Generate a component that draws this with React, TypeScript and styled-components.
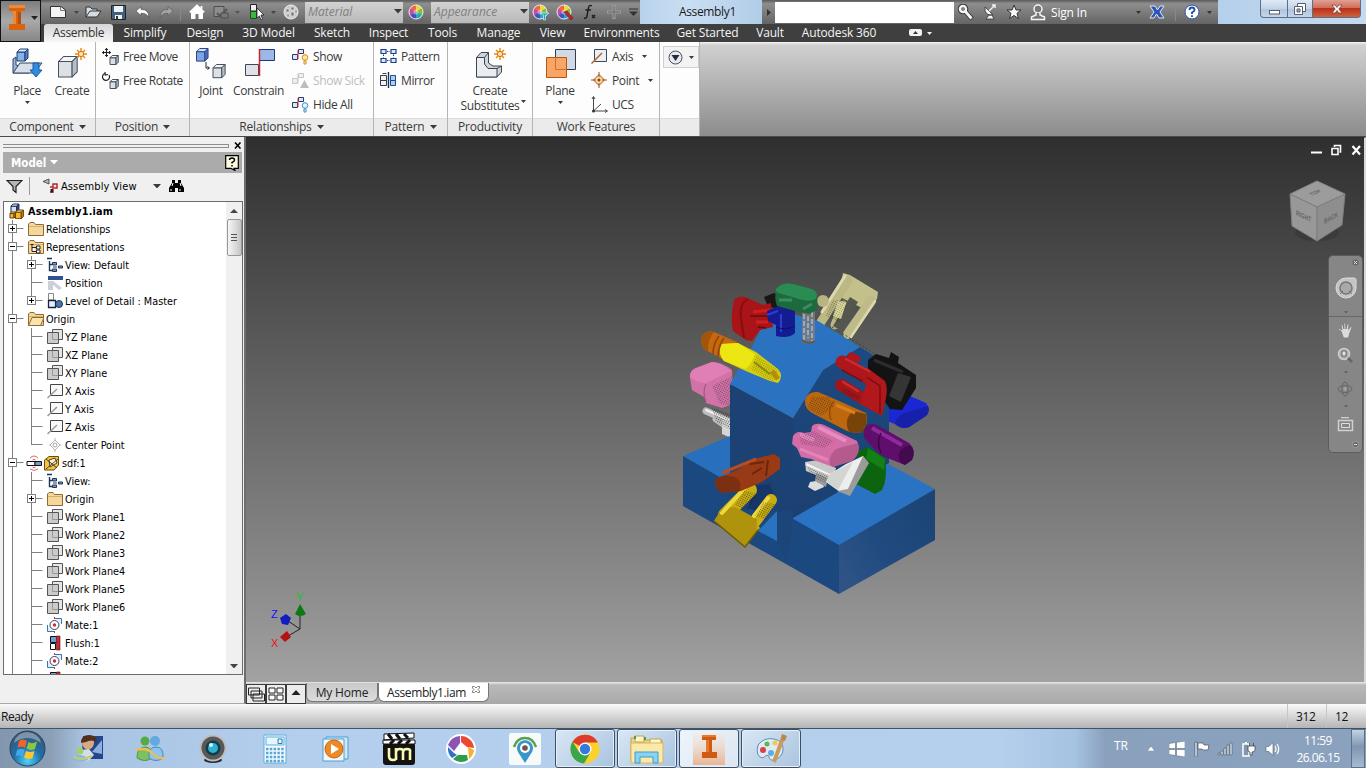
import type { ReactNode } from "react";
import styled, { createGlobalStyle, css } from "styled-components";

const GlobalStyle = createGlobalStyle`
  * { box-sizing: border-box; }
  body {
    margin: 0;
    overflow: hidden;
    background: #f0f0f0;
    font-family: "Open Sans", "Noto Sans", sans-serif;
    font-size: 12px;
    color: #3a3a3a;
  }
  svg { display: block; flex: none; }
`;

const Window = styled.div`
  width: 1366px;
  height: 768px;
  display: flex;
  flex-direction: column;
  overflow: hidden;
`;

/* ---------- header ---------- */

const Header = styled.div`
  display: flex;
  height: 42px;
  background: #3f3f3f;
`;

const AppButton = styled.div`
  width: 41px;
  height: 42px;
  border: 1px solid #111;
  background: linear-gradient(#7d7d7d, #a9a9a9 50%, #868686);
  display: flex;
  align-items: center;
  justify-content: space-between;
  padding: 0 2px 7px 6px;
`;

const HeaderRows = styled.div`
  flex: 1;
  display: flex;
  flex-direction: column;
`;

const TitleBar = styled.div`
  display: flex;
  height: 24px;
  background: linear-gradient(#5a5a5a, #8e8e8e 15%, #646464);
`;

const Slot = styled.div<{ $w: number }>`
  width: ${(p) => p.$w}px;
  height: 24px;
  flex: none;
  display: flex;
  align-items: center;
  justify-content: center;
`;

const Combo = styled.div<{ $w: number }>`
  width: ${(p) => p.$w}px;
  height: 21px;
  margin-top: 2px;
  flex: none;
  display: flex;
  align-items: center;
  justify-content: space-between;
  padding: 0 1px 2px 3px;
  background: linear-gradient(#d2d2d2, #b9b9b9);
  color: #808080;
  font-style: italic;
  font-size: 12px;
`;

const DocTitle = styled.div`
  width: 122px;
  flex: none;
  padding: 3px 0 0 39px;
  line-height: 18px;
  background: linear-gradient(90deg, #b9d2ec, #c9def3 40%, #b2cde9);
  color: #1a1a1a;
  letter-spacing: -0.35px;
`;

const SearchBox = styled.div`
  width: 179px;
  height: 21px;
  margin-top: 2px;
  flex: none;
  background: #fff;
`;

const SignIn = styled.div`
  width: 84px;
  line-height: 26px;
  padding-left: 1px;
  color: #fff;
  letter-spacing: -0.2px;
`;

const Glass = styled.div`
  flex: 1;
  display: flex;
  justify-content: flex-end;
  align-items: flex-start;
  padding-right: 5px;
  background: linear-gradient(90deg, #b5d0ec, #c5daef);
`;

const WinButton = styled.div<{ $w: number; $close?: boolean }>`
  width: ${(p) => p.$w}px;
  height: 18px;
  border: 1px solid #5c6f86;
  border-top: 0;
  display: flex;
  align-items: center;
  justify-content: center;
  background: linear-gradient(#dfe9f5, #c3d4e8 50%, #adc3dc 51%, #c3d6ec);
  & + & { border-left: 0; }
  &:first-child { border-radius: 0 0 0 4px; }
  ${(p) =>
    p.$close &&
    css`
      border-radius: 0 0 4px 0;
      background: linear-gradient(#e0a193, #cf6b55 48%, #b93219 50%, #d0623f);
    `}
`;

const TabRow = styled.div`
  display: flex;
  height: 18px;
`;

const RibbonTab = styled.div<{ $w: number; $active?: boolean }>`
  width: ${(p) => p.$w}px;
  flex: none;
  text-align: center;
  line-height: 17px;
  white-space: nowrap;
  letter-spacing: -0.15px;
  color: #f4f4f4;
  ${(p) =>
    p.$active &&
    css`
      background: linear-gradient(#d6d6d6, #f6f6f6);
      border-radius: 3px 3px 0 0;
      letter-spacing: -0.3px;
      color: #333;
    `}
`;

/* ---------- ribbon ---------- */

const Ribbon = styled.div`
  display: flex;
  height: 95px;
  border-bottom: 1px solid #4b4b4b;
  background: linear-gradient(#f4f4f4 0, #d0d0d0 3px, #8c8c8c);
`;

const Panel = styled.div<{ $w: number }>`
  width: ${(p) => p.$w}px;
  flex: none;
  display: flex;
  flex-direction: column;
  border-right: 1px solid #b5b5b5;
  background: #fdfdfd;
`;

const PanelBody = styled.div<{ $pl?: number }>`
  height: 76px;
  display: flex;
  padding-left: ${(p) => p.$pl ?? 0}px;
`;

const PanelFooter = styled.div`
  height: 18px;
  display: flex;
  align-items: center;
  justify-content: center;
  gap: 5px;
  padding-bottom: 2px;
  background: #ebebeb;
  border-top: 1px solid #dcdcdc;
  white-space: nowrap;
  letter-spacing: -0.2px;
`;

const BigButton = styled.div<{ $w: number; $loose?: boolean }>`
  width: ${(p) => p.$w}px;
  flex: none;
  display: flex;
  flex-direction: column;
  align-items: center;
  padding-top: 5px;
  line-height: 15px;
  text-align: center;
  white-space: nowrap;
  letter-spacing: -0.35px;
  & > svg:first-child { margin-bottom: 4px; }
  & > svg:last-child:not(:first-child) { margin-top: 3px; }
`;

const SubstituteRow = styled.div`
  display: flex;
  align-items: center;
  gap: 2px;
  padding-left: 7px;
  & > svg { margin-bottom: 9px; }
`;

const SmallList = styled.div<{ $ml?: number }>`
  display: flex;
  flex-direction: column;
  padding-top: 2px;
  margin-left: ${(p) => p.$ml ?? 0}px;
`;

const SmallButton = styled.div<{ $dim?: boolean }>`
  height: 24px;
  display: flex;
  align-items: center;
  gap: 4px;
  white-space: nowrap;
  letter-spacing: -0.4px;
  color: ${(p) => (p.$dim ? "#bdbdbd" : "#3a3a3a")};
  & > svg:last-child:not(:first-child) { margin-left: 5px; }
`;

const DropButton = styled.div`
  width: 36px;
  height: 22px;
  margin-top: 4px;
  display: flex;
  align-items: center;
  justify-content: center;
  gap: 6px;
  border: 1px solid #cfcfcf;
  background: #f3f3f3;
`;

/* ---------- browser panel ---------- */

const Work = styled.div`
  display: flex;
  height: 567px;
`;

const Browser = styled.div`
  width: 246px;
  flex: none;
  padding: 3px 1px 0 3px;
  background: #f0f0f0;
  border-right: 2px solid #6e6e6e;
  border-bottom: 1px solid #a8a8a8;
  font-family: "DejaVu Sans Condensed", "DejaVu Sans", sans-serif;
  font-size: 10.75px;
  color: #000;
`;

const Grip = styled.div`
  width: 239px;
  height: 11px;
  display: flex;
  align-items: center;
  justify-content: space-between;
`;

const GripLines = styled.div`
  width: 226px;
  height: 4px;
  border: 1px solid #8d8d8d;
  border-left: 0;
`;

const BrowserTitle = styled.div`
  height: 21px;
  margin-top: 1px;
  width: 239px;
  display: flex;
  align-items: center;
  gap: 4px;
  padding: 0 3px 0 8px;
  background: #ababab;
  color: #fff;
  font-size: 11.5px;
  font-weight: bold;
  & > svg:last-child { margin-left: auto; }
`;

const BrowserTools = styled.div`
  height: 28px;
  display: flex;
  align-items: center;
  padding: 0 0 2px 3px;
`;

const ToolDivider = styled.div`
  width: 1px;
  height: 18px;
  margin: 0 13px 0 6px;
  background: #9b9b9b;
`;

const ViewName = styled.div`
  width: 92px;
  margin-left: 2px;
  font-size: 11px;
  letter-spacing: 0.1px;
  white-space: nowrap;
`;

const TreeBox = styled.div`
  width: 240px;
  height: 474px;
  display: flex;
  border: 1px solid #6b6b6b;
  background: #fff;
`;

const TreeRows = styled.div`
  flex: 1;
  overflow: hidden;
`;

const TreeRow = styled.div<{ $bold?: boolean }>`
  height: 18px;
  display: flex;
  align-items: center;
  gap: 2px;
  white-space: nowrap;
  letter-spacing: ${(p) => (p.$bold ? "0.2px" : "0")};
  font-weight: ${(p) => (p.$bold ? "bold" : "normal")};
`;

const ScrollTrack = styled.div`
  width: 16px;
  display: flex;
  flex-direction: column;
  align-items: center;
  padding: 7px 0 6px;
  background: #f0f0f0;
`;

const ScrollThumb = styled.div`
  width: 15px;
  height: 37px;
  margin-top: 6px;
  margin-bottom: auto;
  display: flex;
  align-items: center;
  justify-content: center;
  border: 1px solid #989898;
  border-radius: 2px;
  background: linear-gradient(90deg, #f5f5f5, #dcdcdc 55%, #c4c4c4);
`;

/* ---------- viewport ---------- */

const Main = styled.div`
  flex: 1;
  display: flex;
  flex-direction: column;
`;

const Viewport = styled.div`
  position: relative;
  height: 545px;
  border-top: 1px solid #2a2a2a;
  border-right: 2px solid #d8d8d8;
  background: linear-gradient(#2f2f2f, #4a4a4a 24%, #8b8b8b 82%, #a2a2a2);
`;

const DocControls = styled.div`
  position: absolute;
  top: 6px;
  right: 2px;
  display: flex;
  gap: 9px;
`;

const NavBar = styled.div`
  position: absolute;
  top: 117px;
  right: 1px;
  width: 35px;
  height: 198px;
  display: flex;
  flex-direction: column;
  align-items: center;
  border: 1px solid #5c5c5c;
  border-radius: 5px;
  background: #868686;
`;

const NavSlot = styled.div<{ $h: number; $end?: boolean; $line?: boolean }>`
  width: 100%;
  height: ${(p) => p.$h}px;
  display: flex;
  align-items: center;
  justify-content: ${(p) => (p.$end ? "flex-end" : "center")};
  padding-right: ${(p) => (p.$end ? 3 : 0)}px;
  border-bottom: ${(p) => (p.$line ? "1px solid #676767" : "0")};
`;

const DocTabs = styled.div`
  display: flex;
  height: 22px;
  background: linear-gradient(#ececec 0, #b9b9b9 3px, #a9a9a9);
  color: #222;
`;

const DocTool = styled.div`
  width: 20px;
  height: 20px;
  margin-top: 2px;
  display: flex;
  align-items: center;
  justify-content: center;
  border: 1px solid #3c3c3c;
  background: #ececec;
`;

const DocTab = styled.div<{ $w: number; $active?: boolean }>`
  width: ${(p) => p.$w}px;
  height: 19px;
  margin-top: 1px;
  display: flex;
  justify-content: center;
  gap: 6px;
  line-height: 19px;
  letter-spacing: ${(p) => (p.$active ? "-0.4px" : "-0.2px")};
  border: 1px solid #777;
  border-top: 0;
  border-radius: 0 0 6px 6px;
  background: ${(p) => (p.$active ? "#fff" : "linear-gradient(#c9c9c9, #dcdcdc)")};
`;

/* ---------- status and task bars ---------- */

const StatusBar = styled.div`
  display: flex;
  height: 25px;
  line-height: 26px;
  padding-left: 1px;
  background: linear-gradient(#fafafa, #dedede 40%, #b4b4b4);
  border-bottom: 1px solid #3f5468;
  color: #111;
  letter-spacing: -0.4px;
`;

const StatusText = styled.div`
  flex: 1;
`;

const StatusCell = styled.div<{ $w: number }>`
  width: ${(p) => p.$w}px;
  padding-left: 8px;
  border-left: 1px solid #c6c6c6;
`;

const TaskBar = styled.div`
  display: flex;
  height: 39px;
  background: linear-gradient(90deg, #8296ad, #8a9eb6 50px, #a9c4e2 85px, #b3cfed 300px, #b5d0ed 1000px, #a5c3e2 1075px, #8aa1bd 1105px, #8ba2be);
`;

const TaskSlot = styled.div<{ $w: number }>`
  width: ${(p) => p.$w}px;
  flex: none;
  display: flex;
  align-items: center;
  justify-content: center;
`;

const TaskButton = styled.div<{ $active?: boolean }>`
  width: 60px;
  height: 39px;
  margin-right: 2px;
  flex: none;
  display: flex;
  align-items: center;
  justify-content: center;
  border: 1px solid #3f4f61;
  border-radius: 3px;
  box-shadow: inset 0 0 0 1px #e6f0fa;
  background: ${(p) => (p.$active ? "linear-gradient(135deg, #eef5fb, #dbe6f1)" : "linear-gradient(135deg, #d9e7f5, #a9c3df)")};
`;

const Tray = styled.div`
  margin-left: auto;
  display: flex;
  color: #fff;
`;

const Language = styled.div`
  width: 33px;
  padding-left: 8px;
  line-height: 34px;
`;

const Clock = styled.div`
  width: 66px;
  padding-top: 3px;
  text-align: center;
  line-height: 17px;
  letter-spacing: -0.55px;
`;

const ShowDesktop = styled.div`
  width: 14px;
  margin-right: 1px;
  border: 1px solid #5c7188;
  background: linear-gradient(#c3d3e4, #8096b0 45%, #a5bbd3);
`;

/* ---------- icons ---------- */

type IconProps = { w?: number; h?: number; vb?: string; children: ReactNode };
const Icon = ({ w = 16, h = 16, vb, children }: IconProps) => (
  <svg width={w} height={h} viewBox={vb ?? `0 0 ${w} ${h}`} fill="none">
    {children}
  </svg>
);

const Caret = ({ color = "#3a3a3a", w = 7 }: { color?: string; w?: number }) => (
  <Icon w={w} h={w / 2 + 0.5} vb="0 0 8 4.5">
    <path d="M0 0H8L4 4.5Z" fill={color} />
  </Icon>
);

const ColorWheel = ({ tool }: { tool?: "cup" | "pen" }) => (
  <Icon w={18} h={18}>
    <path d="M8 9V2A7 7 0 0 1 14 5.5Z" fill="#f3d43b" />
    <path d="M8 9 14 5.5A7 7 0 0 1 14 12.500Z" fill="#79c143" />
    <path d="M8 9 14 12.5A7 7 0 0 1 8 16Z" fill="#25a7c9" />
    <path d="M8 9V16A7 7 0 0 1 2 12.500Z" fill="#4450c0" />
    <path d="M8 9 2 12.5A7 7 0 0 1 2 5.500Z" fill="#c04bb5" />
    <path d="M8 9 2 5.500A7 7 0 0 1 8 2Z" fill="#ee6a3c" />
    <circle cx="8" cy="9" r="2.500" fill="#fff" opacity=".4" />
    <circle cx="8" cy="9" r="7" stroke="#eee" />
    {tool === "cup" && <path d="M8 10H17L15 12H13.500V17H11.500V12Z" fill="#2f9fc4" stroke="#dff" strokeWidth=".6" />}
    {tool === "pen" && <path d="M8 9 15 17 17 15 11 8Z" fill="#c3242b" stroke="#711" strokeWidth=".6" />}
  </Icon>
);

const Cube = ({ x = 0, y = 0, s = 1, fill = "#dde1e6", top = "#f4f5f7", side = "#b8bec6", stroke = "#45505e" }) => (
  <g transform={`translate(${x} ${y}) scale(${s})`} stroke={stroke} strokeWidth={1 / s} strokeLinejoin="round">
    <path d="M0 3H8V12H0Z" fill={fill} />
    <path d="M0 3 3 0H11L8 3Z" fill={top} />
    <path d="M8 3 11 0V9L8 12Z" fill={side} />
  </g>
);

const Spark = ({ x, y }: { x: number; y: number }) => (
  <g transform={`translate(${x} ${y})`}>
    <path d="M0-6V6M-6 0H6M-4-4 4 4M4-4-4 4" stroke="#e8890c" strokeWidth="1.4" />
    <circle r="2.600" fill="#ffe9b5" stroke="#d9700a" />
  </g>
);

const PlaceIcon = () => (
  <Icon w={32} h={32}>
    <path d="M2 12 5 10V18L12 20H25L18 26H2Z" fill="#9eb6d2" stroke="#2c4668" />
    <path d="M2 26 9 16H31L23 26Z" fill="#d7dfe8" stroke="#2c4668" />
    <Cube x={6} y={2} fill="#85b2e8" top="#d5e7fb" side="#4f83c6" stroke="#1f3f73" />
    <path d="M22 16H28V23H31L25 30 19 23H22Z" fill="#2f8be0" stroke="#175a9f" />
  </Icon>
);

const CreateIcon = () => (
  <Icon w={32} h={32}>
    <Cube x={2.500} y={9.500} s={1.7} />
    <Spark x={25} y={7} />
  </Icon>
);

const JointIcon = () => (
  <Icon w={32} h={32}>
    <Cube x={1.500} y={1.500} s={1.05} fill="#7ca5e2" top="#cfe0f8" side="#4a72b8" stroke="#2a4887" />
    <path d="M11 15V21H14M12.500 19.500 14.500 21 12.500 22.500" stroke="#222" />
    <Cube x={18} y={17.500} s={1.1} />
  </Icon>
);

const ConstrainIcon = () => (
  <Icon w={32} h={32}>
    <path d="M16.500 2.500H31.500V13.500H16.500Z" fill="#9db8e8" stroke="#1e3a76" />
    <path d="M2.500 17.500H15.500V28.500H2.500Z" fill="#e0e2e5" stroke="#39475c" />
    <path d="M16.500 2V29" stroke="#d1202c" strokeWidth="1.500" />
  </Icon>
);

const SubstituteIcon = () => (
  <Icon w={32} h={32}>
    <path d="M2.500 10.500 7 5.500H14.500V16L19 19H27.500V25L23 30H2.500Z" fill="#cfd4da" stroke="#3c4654" />
    <path d="M2.500 10.500H10.500V17L14 21.500H23V30H2.500Z" fill="#eaecef" stroke="#3c4654" />
    <path d="M10.500 10.500 14.500 5.500M23 21.500 27.500 19" stroke="#3c4654" />
    <Spark x={26} y={7} />
  </Icon>
);

const PlaneIcon = () => (
  <Icon w={32} h={32}>
    <path d="M11.500 2.500H31.500V22.500H11.500Z" fill="#d3d9e2" stroke="#2c3d59" />
    <path d="M2.500 10.500H22.500V30.500H2.500Z" fill="#f9a566" stroke="#b8560e" />
    <path d="M11.500 10.500V22.500H22.500" stroke="#d2702a" />
  </Icon>
);

const FreeIcon = ({ rotate }: { rotate?: boolean }) => (
  <Icon w={17} h={17}>
    {rotate ? (
      <path d="M3 1.500A3.500 3.500 0 1 0 7 3M3 0 3.300 3 6 2.500" stroke="#222" strokeWidth="1.200" />
    ) : (
      <path d="M4.500 0V9M0 4.500H9M3 1.500H6M3 7.500H6M1.500 3V6M7.500 3V6" stroke="#222" strokeWidth="1.100" />
    )}
    <Cube x={8} y={7.500} s={0.75} />
  </Icon>
);

const ShowIcon = ({ kind }: { kind: "show" | "sick" | "hide" }) => {
  const dim = kind === "sick";
  return (
    <Icon w={17} h={17}>
      <path d="M.5 6.500H5.500V11.500H.5ZM6.500 1.500H11.500V5.500H6.500Z" fill={dim ? "#eee" : "#dfe5f2"} stroke={dim ? "#c6c6c6" : "#26396b"} />
      <path d="M6 2V11" stroke={dim ? "#c6c6c6" : "#c92c3c"} />
      {dim ? (
        <path d="M12.500 8 17 16H8Z" fill="#bdbdbd" />
      ) : (
        <g stroke={kind === "show" ? "#d58a12" : "#3b8fc4"}>
          <circle cx="13" cy="9.500" r="2.800" fill={kind === "show" ? "#ffe79a" : "#e4f4ff"} />
          <path d="M12 13H14V16H12Z" />
        </g>
      )}
    </Icon>
  );
};

const PatternIcon = () => (
  <Icon w={17} h={16}>
    <g fill="#dce8fa" stroke="#1b3f86" strokeWidth="1.200">
      <path d="M1 1.500H6V5.500H1ZM11 1.500H16V5.500H11ZM1 10.500H6V14.500H1ZM11 10.500H16V14.500H11Z" />
    </g>
    <path d="M7 3.500H10M3.500 6.500V9.500M13.500 6.500V9.500M7 12.500H10" stroke="#1b3f86" strokeDasharray="1.500 1" />
  </Icon>
);

const MirrorIcon = () => (
  <Icon w={17} h={16}>
    <path d="M.5 3.500H6.500V13.500H.5ZM2.500 1.500H6.500M.5 8.500H6.500" fill="#f0f2f5" stroke="#333e4d" />
    <path d="M10.500 3.500H15.500V13.500H10.500ZM10.500 8.500H15.500" fill="#a9cff3" stroke="#1f4c86" />
    <path d="M8.500 0V16" stroke="#1b2f57" strokeWidth="1.400" />
  </Icon>
);

const AxisIcon = () => (
  <Icon w={17} h={17}>
    <path d="M3.500 1.500H15.500V13.500H3.500Z" fill="#eceff3" stroke="#3c4a60" />
    <path d="M.500 15.500 11 5" stroke="#b5631e" strokeWidth="1.400" />
  </Icon>
);

const PointIcon = () => (
  <Icon w={17} h={17}>
    <path d="M8 2.500 13.500 8 8 13.500 2.500 8Z" fill="#fbd7a6" stroke="#a1551c" />
    <path d="M8 0V5M8 11V16M0 8H5M11 8H16" stroke="#a1551c" />
    <circle cx="8" cy="8" r="1.500" fill="#8a3d0c" />
  </Icon>
);

const UcsIcon = () => (
  <Icon w={17} h={17}>
    <path d="M2.500 1V15H16M2.500 15 10 8M1 3 2.500 .5 4 3M14 13.500 16.500 15 14 16.500" stroke="#4a4a4a" />
    <circle cx="2.500" cy="15" r="1.500" fill="#333" />
  </Icon>
);

const FolderIcon = ({ open, tree }: { open?: boolean; tree?: boolean }) => (
  <Icon>
    <path d="M.5 3 2 1.500H6L7.500 3.500H15.500V14.500H.5Z" fill="#f5d79b" stroke="#8f6b33" />
    <path d="M1 5.500H15" stroke="#d4b06d" />
    {open && <path d="M.5 14.500 4 6.500H16L12.500 14.500Z" fill="#fbe3ae" stroke="#8f6b33" />}
    {tree && <path d="M2.500 5.500H5.500M4 5.500V12.500H8M4 8.500H8M8.500 7V10H12V7ZM8.500 11V14H12V11Z" fill="#fff" stroke="#222" />}
  </Icon>
);

const ViewIcon = () => (
  <Icon>
    <path d="M0 1.500H5M2.500 4V13.500H5M2.500 7.500H5" stroke="#1e3458" strokeWidth="1.400" />
    <path d="M5.500 5.500H9.500V8H5.500ZM5.500 12H9.500V14.500H5.500ZM11.500 9H15.500V11H11.500ZM6 10H10" fill="#7f98c0" stroke="#1e3458" />
  </Icon>
);

const PositionIcon = () => (
  <Icon>
    <path d="M1 1H16V5H1Z" fill="#31538d" />
    <path d="M1 6H6V15H1ZM6 6 15 13 12 15 5 9Z" fill="#c9d0da" />
  </Icon>
);

const DetailIcon = () => (
  <Icon>
    <path d="M1.500.5H6.500V7H1.500Z" fill="#fff" stroke="#888" />
    <path d="M1.500 7.500H8.500V14.500H1.500Z" fill="#eef" stroke="#14233d" strokeWidth="1.300" />
    <circle cx="12" cy="11" r="3.500" fill="#4a76ac" stroke="#1c3152" />
  </Icon>
);

const WorkPlaneIcon = () => (
  <Icon>
    <path d="M5.500.5H15.500V10.500H5.500Z" fill="#e6e6e6" stroke="#555" />
    <path d="M.5 3.500H11.500V14.500H.5Z" fill="#cbcbcb" stroke="#555" />
    <path d="M5.500 4V10.500H11" stroke="#999" />
  </Icon>
);

const WorkAxisIcon = () => (
  <Icon>
    <path d="M3.500 1.500H15.500V12.500H3.500Z" fill="#f8f8f8" stroke="#444" />
    <path d="M.5 15 10 6" stroke="#9a9a9a" strokeWidth="1.500" />
  </Icon>
);

const CenterIcon = () => (
  <Icon>
    <path d="M8 3 13 8 8 13 3 8ZM8 1V4M8 12V15M2 8H4M12 8H14" stroke="#b5b5b5" />
    <circle cx="8" cy="8" r="2" stroke="#a5a5a5" />
  </Icon>
);

const PartIcon = () => (
  <Icon w={34} vb="0 0 34 16">
    <path d="M1 6.500H9V10.500H1Z" fill="#fff" stroke="#111" />
    <path d="M9 6.500H15.500V10.500H9Z" fill="#7d98c4" stroke="#111" />
    <path d="M4 3Q8-1 12 3M4 14Q8 17 12 14M6.500 5Q8 3.500 9.500 5M6.500 12Q8 13.500 9.500 12" stroke="#dd6a64" />
    <path d="M18.500 5 23 1.500H32.500V10L28 15H18.500Z" fill="#f5c242" stroke="#6c4a08" />
    <path d="M20 14 32 4M20 4 31 13M23 5 29 3 31 8 24 12Z" fill="#fff2c0" stroke="#222" strokeWidth=".8" />
  </Icon>
);

const MateIcon = () => (
  <Icon>
    <path d="M8 1.500H14.500V7M.5 8V14.500H7" stroke="#3b74b5" fill="#e3eefb" />
    <circle cx="7.500" cy="8" r="4.500" fill="#fff" stroke="#333f63" />
    <circle cx="7.500" cy="8" r="1.700" fill="#cf2c2c" />
    <path d="M7.500 0V2M7.500 14V16" stroke="#cf2c2c" />
  </Icon>
);

const FlushIcon = () => (
  <Icon>
    <path d="M3.500 1.500H10.500V7.500H3.500Z" fill="#6e9ad6" stroke="#111" />
    <path d="M3.500 8.500H8.500V14.500H3.500Z" fill="#fff" stroke="#111" />
    <path d="M9.500 1H13V15H9.500Z" fill="#c52a33" stroke="#511" strokeWidth=".6" />
  </Icon>
);

const AssemblyIcon = () => (
  <Icon w={17} h={16}>
    <Cube x={2} y={1} s={0.72} fill="#d5e2f6" top="#eef4fd" side="#3a5794" stroke="#14224a" />
    <Cube x={1} y={9} s={0.5} fill="#f3b62e" top="#ffe08a" side="#c98310" stroke="#6b4504" />
    <Cube x={6.500} y={7} s={0.72} fill="#f3b62e" top="#ffe08a" side="#c98310" stroke="#6b4504" />
  </Icon>
);

/* ---------- tree ---------- */

type Node = {
  text: string;
  level: number;
  icon: ReactNode;
  box?: "+" | "-";
  last?: boolean;
};

const planes = [1, 2, 3, 4, 5, 6].map((n) => ({ text: `Work Plane${n}`, level: 2, icon: <WorkPlaneIcon /> }));

const nodes: Node[] = [
  { text: "Assembly1.iam", level: 0, icon: <AssemblyIcon /> },
  { text: "Relationships", level: 1, icon: <FolderIcon />, box: "+" },
  { text: "Representations", level: 1, icon: <FolderIcon tree />, box: "-" },
  { text: "View: Default", level: 2, icon: <ViewIcon />, box: "+" },
  { text: "Position", level: 2, icon: <PositionIcon /> },
  { text: "Level of Detail : Master", level: 2, icon: <DetailIcon />, box: "+", last: true },
  { text: "Origin", level: 1, icon: <FolderIcon open />, box: "-" },
  { text: "YZ Plane", level: 2, icon: <WorkPlaneIcon /> },
  { text: "XZ Plane", level: 2, icon: <WorkPlaneIcon /> },
  { text: "XY Plane", level: 2, icon: <WorkPlaneIcon /> },
  { text: "X Axis", level: 2, icon: <WorkAxisIcon /> },
  { text: "Y Axis", level: 2, icon: <WorkAxisIcon /> },
  { text: "Z Axis", level: 2, icon: <WorkAxisIcon /> },
  { text: "Center Point", level: 2, icon: <CenterIcon />, last: true },
  { text: "sdf:1", level: 1, icon: <PartIcon />, box: "-" },
  { text: "View:", level: 2, icon: <ViewIcon /> },
  { text: "Origin", level: 2, icon: <FolderIcon />, box: "+" },
  ...planes,
  { text: "Mate:1", level: 2, icon: <MateIcon /> },
  { text: "Flush:1", level: 2, icon: <FlushIcon /> },
  { text: "Mate:2", level: 2, icon: <MateIcon /> },
  { text: "", level: 2, icon: <FlushIcon /> },
];

const Guide = ({ node }: { node: Node }) => {
  if (node.level === 0) return <Icon w={3} h={18}>{null}</Icon>;
  const cx = node.level === 1 ? 8.5 : 27.5;
  const w = node.text === "sdf:1" ? 20 : node.level === 1 ? 22 : 41;
  return (
    <Icon w={w} h={18}>
      <path d="M8.500 0V18" stroke="#808080" />
      {node.level === 2 && <path d={node.last ? "M27.500 0V9" : "M27.500 0V18"} stroke="#808080" />}
      <path d={`M${cx} 8.500H${cx + 11}`} stroke="#808080" />
      {node.box && (
        <>
          <rect x={cx - 4} y="4.500" width="8" height="8" fill="#fff" stroke="#808080" />
          <path d={`M${cx - 2.5} 8.500H${cx + 2.5}${node.box === "+" ? `M${cx} 6V11` : ""}`} stroke="#000" />
        </>
      )}
    </Icon>
  );
};

/* ---------- 3D scene ---------- */

const Scene = () => (
  <svg width="1118" height="544" viewBox="246 138 1118 544" fill="none">
    <defs>
      <pattern id="mesh" width="2" height="2" patternUnits="userSpaceOnUse" patternTransform="rotate(25)">
        <path d="M0 0H1V1H0Z" fill="#111" />
      </pattern>
      <linearGradient id="side" x1="839" y1="570" x2="935" y2="510" gradientUnits="userSpaceOnUse">
        <stop stopColor="#2f5385" />
        <stop offset=".4" stopColor="#214b80" />
        <stop offset="1" stopColor="#1c4475" />
      </linearGradient>
      <linearGradient id="right" x1="0" y1="0" x2="0" y2="1">
        <stop stopColor="#1b4a82" />
        <stop offset="1" stopColor="#1c4070" />
      </linearGradient>
    </defs>

    {/* far side clamps */}
    <g strokeLinecap="round">
      <path d="M706 411 731 422M716 419 731 429" stroke="#bdbdbd" strokeWidth="7" />
      <path d="M706 410 731 421" stroke="#f2f2f2" strokeWidth="2" />
      <path d="M722 420H731V438L722 434Z" fill="#d5d5d5" />
      <path d="M712 408 731 414V430L716 422Z" fill="url(#mesh)" opacity=".6" />
    </g>
    <path d="M690 378Q689 371 696 368L712 362Q722 362 732 370L733 404 722 408 706 403 704 397 692 390Z" fill="#d273a8" />
    <path d="M690 377Q697 383 706 383L731 371Q722 363 712 362L696 368Q690 370 690 377Z" fill="#e07fb5" />
    <path d="M706 384Q702 392 706 402" stroke="#a0507c" />
    <path d="M712 386 732 376V406L720 404Z" fill="url(#mesh)" opacity=".45" />
    <g strokeLinecap="round">
      <path d="M843 273 850 275 878 292 877 299 866 310 838 296Z" fill="#c4c08c" />
      <path d="M848 280 821 322M843 305 835 325" stroke="#bcb884" strokeWidth="9" />
      <path d="M845 276 822 312" stroke="#dedab0" strokeWidth="3" />
      <path d="M871 301 848 334" stroke="#bfbb88" strokeWidth="10" />
      <path d="M875 301 851 337" stroke="#dbd7ac" strokeWidth="2.500" />
      <circle cx="823" cy="301" r="6" fill="#b9b581" />
      <path d="M850 297 858 302 840 330 833 326Z" fill="#55564c" />
      <path d="M838 301 846 303 841 319 833 316Z" fill="#dfdb9b" />
      <path d="M832 300 846 300 840 322 826 316Z" fill="url(#mesh)" opacity=".4" />
    </g>
    <path d="M832 327 880 357" stroke="#3a4045" strokeDasharray="2 2" />
    <path d="M882 410 905 400 910 396 926 403Q931 409 927 415L909 427Q902 430 895 424L882 419Z" fill="#1a28d4" />
    <path d="M895 424Q895 416 908 412L928 406Q930 412 926 416L909 427Q902 430 895 424Z" fill="#1620aa" />
    <path d="M764 297 774 293 785 298 782 309 768 307Z" fill="#171717" />

    {/* column and base */}
    <path d="M683 456 730 436V483Z" fill="#2870bd" />
    <path d="M888 464 935 489 839 546 790 519Z" fill="#2a73c2" />
    <path d="M860 347 889 365V463L793 518V418L823 370Z" fill="url(#right)" />
    <path d="M683 456 839 545V594L683 506Z" fill="#1c4880" />
    <path d="M839 545 935 489V540L839 594Z" fill="url(#side)" />
    <path d="M730 384 793 418V518L777 512 730 484Z" fill="#1b4273" />
    <path d="M777 511V541L758 531Z" fill="#2a73c2" />
    <path d="M777 512 793 510V519L787 560 777 546Z" fill="#1c4579" />
    <path d="M730 384 754 343 760 330 793 314 818 321 860 347 823 370 793 418Z" fill="#2b72c1" />

    {/* top row */}
    <path d="M734 300Q738 296 745 297L763 305 771 303 773 327 760 330 752 341 746 340 733 331Q730 318 734 300Z" fill="#a81418" />
    <path d="M748 299Q739 304 741 318T744 338" stroke="#8a0d11" strokeWidth="2" />
    <path d="M753 312 770 310M756 322 768 322" stroke="#d01e20" strokeWidth="3" />
    <path d="M750 316 768 316M758 327 766 328" stroke="#690a0d" strokeWidth="1.500" />
    <path d="M767 311 776 307H795V333Q789 339 776 336V325L768 321Z" fill="#141c92" />
    <path d="M767 315 778 311M781 314V332" stroke="#2f3cd3" strokeWidth="2" />
    <path d="M776 327Q785 331 795 326" stroke="#0b1067" />
    <path d="M802 307H815V341Q809 346 802 342Z" fill="#7d7f80" opacity=".75" />
    <path d="M804 314V341M808 316V338M812 312V341" stroke="#d5d5d5" strokeDasharray="5 2" />
    <path d="M802 340Q808 345 815 341" stroke="#6d533c" strokeWidth="2" />
    <path d="M776 289Q781 282 793 284L812 289Q819 293 817 310L809 314 795 311 777 306Q774 298 776 289Z" fill="#1c6a3e" />
    <path d="M776 289Q782 282 793 284L812 289Q819 292 816 299 808 303 796 298L778 293Q775 291 776 289Z" fill="#2a8c53" />
    <path d="M779 300H792M803 309 812 304" stroke="#4a9b74" strokeWidth="3" opacity=".7" />

    {/* orange and yellow on the slope */}
    <path d="M702 336Q706 330 714 332L737 342 726 361 704 349Q700 343 702 336Z" fill="#c5680e" />
    <path d="M702 336Q706 330 714 332 708 338 708 351L704 349Q700 343 702 336Z" fill="#a3540b" />
    <path d="M719 336Q713 344 713 354M724 338Q718 346 718 357" stroke="#8b4608" strokeWidth="1.500" />
    <path d="M722 344 738 343 756 352 778 369Q784 376 778 383L770 381 748 372 724 361Q717 353 722 344Z" fill="#d5ce0f" />
    <path d="M722 344Q717 354 724 361L745 369Q751 366 755 354L738 343Z" fill="#eee613" />
    <path d="M757 355 779 371 773 382 751 370Z" fill="url(#mesh)" opacity=".35" />
    <path d="M754 362 770 374" stroke="#8c8708" strokeWidth="2" />
    <path d="M772 371 778 379" stroke="#b38b0d" strokeWidth="5" />

    {/* right face clamps */}
    <path d="M868 360 876 354 889 358 891 352 899 357 898 363 916 375V388L902 410 890 409 868 378Z" fill="#131313" />
    <path d="M898 373 911 377 901 402 889 396Z" fill="#353535" />
    <path d="M874 360 903 372" stroke="#2c2c2c" strokeWidth="3" />
    <g strokeLinecap="round">
      <path d="M842 362 870 379" stroke="#ad171b" strokeWidth="13" />
      <path d="M841 385 864 399" stroke="#a21519" strokeWidth="12" />
      <path d="M851 356 857 359" stroke="#ad171b" strokeWidth="7" />
      <path d="M866 367 885 381Q888 388 886 398L882 416 860 404 868 378Z" fill="#b0181c" />
      <path d="M846 359 869 371M843 382 858 391" stroke="#cf2a2d" strokeWidth="2.500" />
      <path d="M842 370 862 381M868 378 880 386 880 413" stroke="#7c0d10" strokeWidth="1.500" />
      <path d="M843 388 860 396 858 400 842 393Z" fill="url(#mesh)" opacity=".5" />
    </g>
    <path d="M864 429Q869 421 879 426L909 443Q917 450 912 460L905 465 880 455 864 438Z" fill="#5f0f6b" />
    <path d="M872 428 902 445" stroke="#8d2b9c" strokeWidth="4" />
    <path d="M881 433Q876 442 881 453" stroke="#3f0548" strokeWidth="1.500" />
    <path d="M901 463Q895 452 905 447L910 445Q916 452 912 460L905 465Z" fill="#440a4e" />
    <path d="M858 451 868 447 885 458Q888 479 882 490L875 494 856 484Z" fill="#0c640f" />
    <path d="M868 448 885 459 884 470 866 459Z" fill="#128016" />
    <path d="M805 400Q808 391 818 392L830 397 866 413Q870 423 861 433L849 432 816 415Q804 410 805 400Z" fill="#bd680f" />
    <path d="M811 397 829 397 834 406 821 416 808 408Z" fill="url(#mesh)" opacity=".5" />
    <path d="M849 432Q843 420 853 411L866 414Q869 425 861 433Z" fill="#774309" />
    <path d="M834 401Q827 409 831 420" stroke="#8f4c08" strokeWidth="1.500" />
    <path d="M836 405 855 413" stroke="#d9801d" strokeWidth="3" />
    <path d="M805 462 818 460 836 468 833 482 806 471Z" fill="#c8c8c8" />
    <path d="M806 464 832 476" stroke="#f3f3f3" strokeWidth="2" />
    <path d="M810 482 822 480 824 487 815 491 808 487Z" fill="#dcdcdc" />
    <path d="M816 473 828 478 826 487 815 481Z" fill="#9a9a9a" />
    <path d="M806 466 834 477 829 484 815 479Z" fill="url(#mesh)" opacity=".5" />
    <path d="M830 474 846 464 863 456 866 460 848 490 840 492 826 482Z" fill="#ededed" />
    <path d="M830 474 846 466 853 462 838 490 826 482Z" fill="#d2d5d2" />
    <path d="M863 456 869 463 850 496 837 491 848 489Z" fill="#9b9b9b" />
    <path d="M793 436Q797 430 804 433L811 432 812 426Q816 422 824 425L857 441Q862 451 853 460L833 467 811 459 801 457 797 448 792 444Z" fill="#d26da5" />
    <path d="M830 465Q828 453 839 448L858 443Q861 454 852 461L833 467Z" fill="#b55a8c" />
    <path d="M818 427 846 441M800 435 814 440" stroke="#e78cc2" strokeWidth="4" />
    <path d="M800 449 828 460" stroke="#e283ba" strokeWidth="3" />
    <path d="M799 436 814 431 834 441 824 448 801 444Z" fill="url(#mesh)" opacity=".4" />

    {/* front clamps */}
    <path d="M755 486 770 484 776 500 758 512 748 508Z" fill="#16366a" />
    <g strokeLinecap="round">
      <path d="M750 490 725 515" stroke="#c9ae12" strokeWidth="14" />
      <path d="M771 500 750 528" stroke="#c9ae12" strokeWidth="12" />
      <path d="M726 505 754 520 760 528 745 547 714 521Z" fill="#c2a510" />
      <path d="M722 508 735 507 757 519 756 532 745 547 714 521Z" fill="#af930d" />
      <path d="M745 488 722 513M768 498 754 516" stroke="#efd93a" strokeWidth="4" />
      <path d="M714 521 745 547 758 530" stroke="#6b5906" strokeWidth="1.500" />
      <path d="M744 490 757 494 748 511 735 505ZM763 502 775 504 766 520 755 516Z" fill="url(#mesh)" opacity=".55" />
    </g>
    <path d="M716 479 739 469 754 459 774 454 780 458V469L762 482 741 491 722 493Q713 487 716 479Z" fill="#993a17" />
    <path d="M722 473 756 459" stroke="#b54c22" strokeWidth="3" />
    <path d="M716 479Q723 473 735 477 742 481 740 491L722 493Q713 487 716 479Z" fill="#7d2f11" />
    <path d="M750 464 764 462M768 460 766 476M752 474 762 468" stroke="#6e2509" strokeWidth="2" />

    {/* view cube */}
    <ellipse cx="1317" cy="233" rx="22" ry="8" fill="#303030" opacity=".4" />
    <path d="M1317 181 1345 194 1317 207 1290 194Z" fill="#9c9c9c" stroke="#868686" />
    <path d="M1290 194 1317 207V241L1292 226Z" fill="#989898" stroke="#7e7e7e" />
    <path d="M1345 194 1317 207V241L1342 225Z" fill="#8e8e8e" stroke="#7e7e7e" />
    <g fontFamily="Liberation Sans" fontSize="6.500" fontWeight="bold" fill="#666">
      <text transform="matrix(.75 .36 0 1.100 1296 215)">RIGHT</text>
      <text transform="matrix(.75 -.4 0 1.100 1324 224)">BACK</text>
      <text transform="matrix(.8 -.3 .5 .6 1311 196)">TOP</text>
    </g>

    {/* axis triad */}
    <path d="M300 629V612M300 629 288 621M300 629 288 636" stroke="#222" />
    <path d="M295 614 300 604 306 614Q300 618 295 614Z" fill="#0c7a12" />
    <path d="M280 618 286 614 291 618 288 625 282 624Z" fill="#121dc4" />
    <path d="M280 637 287 631 291 637 285 642Z" fill="#b81111" />
    <g fontFamily="Liberation Sans" fontSize="11">
      <text x="271" y="618" fill="#1111ff">Z</text>
      <text x="271" y="647" fill="#ee1111">X</text>
      <text x="296" y="601" fill="#1fc41f">Y</text>
    </g>
  </svg>
);

/* ---------- page ---------- */

const Titles = () => (
  <TitleBar>
    <Slot $w={33}>
      <Icon w={16} h={14}><path d="M.5 1.500H11L15.500 5V12.500H.5Z" fill="#f4f4f4" stroke="#333" /><path d="M10.500 1.500V5.500H15" stroke="#777" /></Icon>
    </Slot>
    <Slot $w={5}><Caret w={5} color="#444" /></Slot>
    <Slot $w={28}>
      <Icon w={17} h={14}><path d="M1 12V2H5L7 4H12V6M1 12 5 6H16L12 12Z" fill="#d6dde2" stroke="#333" /></Icon>
    </Slot>
    <Slot $w={22}>
      <Icon w={15} h={15}><path d="M.5.5H14.500V14.500H.5Z" fill="#40617e" stroke="#222" /><path d="M3 1H12V7H3ZM4 10H11V14H4Z" fill="#eef2f5" /><path d="M5 11H7V14H5Z" fill="#333" /></Icon>
    </Slot>
    <Slot $w={26}>
      <Icon w={15} h={13}><path d="M1 5 6 .7V3.500Q14 3 14 12Q12 7 6 7.300V9.500Z" fill="#fff" stroke="#444" strokeWidth=".6" /></Icon>
    </Slot>
    <Slot $w={22}>
      <Icon w={15} h={13}><path d="M14 5 9 .7V3.500Q1 3 1 12Q3 7 9 7.300V9.500Z" fill="#a4a4a4" stroke="#555" strokeWidth=".6" /></Icon>
    </Slot>
    <Slot $w={7}><Icon w={1} h={18}><path d="M.5 0V18" stroke="#888" /></Icon></Slot>
    <Slot $w={25}>
      <Icon w={16} h={16}><path d="M2 8V15H6.500V10H9.500V15H14V8L8 2.500Z" fill="#fff" /><path d="M.8 8.300 8 1.500 15.200 8.300M12.500 2V5" stroke="#fff" strokeWidth="1.800" /></Icon>
    </Slot>
    <Slot $w={24}>
      <Icon w={16} h={14}><path d="M1 1.500H11V11.500H1Z" fill="#8d8d8d" stroke="#4e4e4e" /><path d="M4 8 7 11 14 4" stroke="#555" strokeWidth="2" /><path d="M8 8H15V13H8Z" fill="#787878" stroke="#4e4e4e" /></Icon>
    </Slot>
    <Slot $w={9}><Caret w={5} color="#555" /></Slot>
    <Slot $w={28}>
      <Icon w={16} h={18}><path d="M2.500 1.500H8.500V8H2.500Z" fill="#eee" stroke="#222" /><path d="M2.500 8.500H8.500V15.500H2.500Z" fill="#3db53f" stroke="#17521a" /><path d="M9 5V15L11.500 13 13 17 14.500 16 13 12H16Z" fill="#fff" stroke="#222" strokeWidth=".8" /></Icon>
    </Slot>
    <Slot $w={6}><Caret w={5} color="#444" /></Slot>
    <Slot $w={29}>
      <Icon w={16} h={16}><circle cx="8" cy="8" r="7" fill="#c9c9c9" stroke="#eee" /><path d="M3 5H6V8H3ZM8 3H11V6H8ZM8 8H11V12H8ZM4 10H6V13H4ZM12 6H14V9H12Z" fill="#777" stroke="#f2f2f2" strokeWidth=".6" /></Icon>
    </Slot>
    <Combo $w={98}>Material<Caret w={8} /></Combo>
    <Slot $w={28}><ColorWheel /></Slot>
    <Combo $w={98}>Appearance<Caret w={8} /></Combo>
    <Slot $w={23}><ColorWheel tool="cup" /></Slot>
    <Slot $w={26}><ColorWheel tool="pen" /></Slot>
    <Slot $w={24}>
      <Icon w={16} h={16}><path d="M10 2Q7 0 6.500 4L5 12Q4.500 15 2 14M3.500 6H9M10 11 13 14M13 11 10 14" stroke="#1d1d1d" strokeWidth="1.400" /></Icon>
    </Slot>
    <Slot $w={24}><Icon w={16} h={16}><path d="M8 1V15M1 8H15" stroke="#9f9f9f" strokeWidth="3" /><path d="M8 2V14M2 8H14" stroke="#656565" /></Icon></Slot>
    <Slot $w={14}><Icon w={9} h={8}><path d="M0 1H9" stroke="#333" /><path d="M0 3.500H9L4.500 8Z" fill="#333" /></Icon></Slot>
    <DocTitle>Assembly1</DocTitle>
    <Slot $w={13}><Icon w={4} h={7}><path d="M0 0 4 3.500 0 7Z" fill="#333" /></Icon></Slot>
    <SearchBox />
    <Slot $w={24}>
      <Icon w={16} h={17}><circle cx="5" cy="5" r="3.300" stroke="#333" strokeWidth="4" /><path d="M7 7 14 15" stroke="#333" strokeWidth="4.500" /><circle cx="5" cy="5" r="3" stroke="#f5f5f5" strokeWidth="2.500" /><path d="M7 7 13.500 14.500" stroke="#f5f5f5" strokeWidth="2.800" /></Icon>
    </Slot>
    <Slot $w={24}>
      <Icon w={15} h={16}><path d="M2 3Q1 12 10 11ZM6 11 3 15H11L9 11Z" fill="#f3f3f3" stroke="#333" strokeWidth=".8" /><path d="M6 7 11 2M9 1H12V4" stroke="#f3f3f3" strokeWidth="1.400" /></Icon>
    </Slot>
    <Slot $w={24}>
      <Icon w={16} h={16}><path d="M8 1 10 6H15L11 9.300 12.500 14.500 8 11.500 3.500 14.500 5 9.300 1 6H6Z" fill="#f8f8f8" stroke="#333" /></Icon>
    </Slot>
    <Slot $w={24}>
      <Icon w={16} h={17}><circle cx="8" cy="5" r="4" fill="#777" stroke="#f5f5f5" strokeWidth="1.500" /><path d="M6 9V11L1.500 13V15.500H14.500V13L10 11V9" fill="#777" stroke="#f5f5f5" strokeWidth="1.500" /></Icon>
    </Slot>
    <SignIn>Sign In</SignIn>
    <Slot $w={8}><Caret w={5} color="#333" /></Slot>
    <Slot $w={30}>
      <Icon w={16} h={14}><path d="M1 1H6L8.500 5 11 1H15L11 7 15 13H10L7.500 9 5 13H1L5 7Z" fill="#2e53b8" stroke="#dde6fb" /></Icon>
    </Slot>
    <Slot $w={6}><Icon w={1} h={18}><path d="M.5 0V18" stroke="#888" /></Icon></Slot>
    <Slot $w={28}>
      <Icon w={16} h={16}><circle cx="8" cy="8" r="7" fill="#fff" stroke="#2b549c" /><path d="M5.500 6Q5.500 3.500 8 3.500T10.500 6Q10.500 7.200 8 8.500V10M8 11.200V13" stroke="#2050b0" strokeWidth="1.900" /></Icon>
    </Slot>
    <Slot $w={6}><Caret w={5} color="#333" /></Slot>
    <Slot $w={6} />
    <Glass>
      <WinButton $w={28}><Icon w={11} h={12}><rect x=".5" y="7.500" width="10" height="3.500" fill="#fff" stroke="#555f6d" /></Icon></WinButton>
      <WinButton $w={25}><Icon w={12} h={12}><path d="M3.500.5H11.500V8.500H3.500Z" fill="#fff" stroke="#555f6d" /><path d="M.5 3.500H8.500V11.500H.5Z" fill="#fff" stroke="#555f6d" /><path d="M3 6H6V9H3Z" fill="#9fb3cb" stroke="#555f6d" /></Icon></WinButton>
      <WinButton $w={48} $close><Icon w={12} h={10}><path d="M1 1H4L6 3.500 8 1H11L7.800 5 11 9H8L6 6.500 4 9H1L4.200 5Z" fill="#fff" stroke="#6a3a38" strokeWidth=".7" /></Icon></WinButton>
    </Glass>
  </TitleBar>
);

const tabs: [string, number][] = [
  ["Assemble", 69], ["Simplify", 64], ["Design", 56], ["3D Model", 71], ["Sketch", 56], ["Inspect", 57],
  ["Tools", 51], ["Manage", 61], ["View", 47], ["Environments", 91], ["Get Started", 81], ["Vault", 44], ["Autodesk 360", 94],
];

const RibbonPanels = () => (
  <Ribbon>
    <Panel $w={96}>
      <PanelBody $pl={4}>
        <BigButton $w={46}><PlaceIcon />Place<Caret w={5} /></BigButton>
        <BigButton $w={44}><CreateIcon />Create</BigButton>
      </PanelBody>
      <PanelFooter>Component <Caret /></PanelFooter>
    </Panel>
    <Panel $w={94}>
      <PanelBody $pl={6}>
        <SmallList>
          <SmallButton><FreeIcon />Free Move</SmallButton>
          <SmallButton><FreeIcon rotate />Free Rotate</SmallButton>
        </SmallList>
      </PanelBody>
      <PanelFooter>Position <Caret /></PanelFooter>
    </Panel>
    <Panel $w={184}>
      <PanelBody>
        <BigButton $w={42}><JointIcon />Joint</BigButton>
        <BigButton $w={53}><ConstrainIcon />Constrain</BigButton>
        <SmallList $ml={7}>
          <SmallButton><ShowIcon kind="show" />Show</SmallButton>
          <SmallButton $dim><ShowIcon kind="sick" />Show Sick</SmallButton>
          <SmallButton><ShowIcon kind="hide" />Hide All</SmallButton>
        </SmallList>
      </PanelBody>
      <PanelFooter>Relationships <Caret /></PanelFooter>
    </Panel>
    <Panel $w={74}>
      <PanelBody $pl={6}>
        <SmallList>
          <SmallButton><PatternIcon />Pattern</SmallButton>
          <SmallButton><MirrorIcon />Mirror</SmallButton>
        </SmallList>
      </PanelBody>
      <PanelFooter>Pattern <Caret /></PanelFooter>
    </Panel>
    <Panel $w={85}>
      <PanelBody>
        <BigButton $w={84}>
          <SubstituteIcon />Create
          <SubstituteRow>Substitutes<Caret w={5} /></SubstituteRow>
        </BigButton>
      </PanelBody>
      <PanelFooter>Productivity</PanelFooter>
    </Panel>
    <Panel $w={127}>
      <PanelBody>
        <BigButton $w={54}><PlaneIcon />Plane<Caret w={5} /></BigButton>
        <SmallList $ml={4}>
          <SmallButton><AxisIcon />Axis <Caret w={5} /></SmallButton>
          <SmallButton><PointIcon />Point <Caret w={5} /></SmallButton>
          <SmallButton><UcsIcon />UCS</SmallButton>
        </SmallList>
      </PanelBody>
      <PanelFooter>Work Features</PanelFooter>
    </Panel>
    <Panel $w={40}>
      <PanelBody $pl={3}>
        <DropButton>
          <Icon w={15} h={15}><circle cx="7.500" cy="7.500" r="6.500" fill="#e7eaf0" stroke="#4a5260" /><path d="M3.500 5H11.500L7.500 11Z" fill="#222c3d" /></Icon>
          <Caret w={5} />
        </DropButton>
      </PanelBody>
      <PanelFooter />
    </Panel>
  </Ribbon>
);

const BrowserPanel = () => (
  <Browser>
    <Grip>
      <GripLines />
      <Icon w={8} h={7}><path d="M1 .5 6.500 6.500M6.500 .5 1 6.500" stroke="#000" strokeWidth="1.600" /></Icon>
    </Grip>
    <BrowserTitle>
      Model <Caret w={8} color="#fff" />
      <Icon w={14} h={16}><path d="M.7.700H13.300V13.300H9L10 15.500 6 13.300H.7Z" fill="#fffde0" stroke="#000" strokeWidth="1.200" /><path d="M4.500 5Q4.500 3 7 3T9.500 5Q9.500 6.500 7 7.500V8.500M7 10V11.500" stroke="#000" strokeWidth="1.500" /></Icon>
    </BrowserTitle>
    <BrowserTools>
      <Icon w={17} h={16}><path d="M1 2.500H16L10 8.500V14.500L7 12V8.500Z" fill="#b5b5b5" stroke="#222" strokeWidth="1.200" /></Icon>
      <ToolDivider />
      <Icon w={16} h={16}><path d="M0 3.500 6 1V6Z" fill="#aebccb" stroke="#333" strokeWidth=".8" /><path d="M7 9H10V14H7M10 9V6H14V10H11" stroke="#b3262b" strokeWidth="1.500" /><path d="M7.500 11H10V14.500H7.500Z" fill="#222" /></Icon>
      <ViewName>Assembly View</ViewName>
      <Caret w={8} />
      <Icon w={24} h={14} vb="-8 0 24 14"><path d="M3 1H6V4H9V1H12V4L15 9V13H9V9H6V13H0V9L3 4Z" fill="#000" /><path d="M2 10V12M11 10V12M4 4 3 7M11 4 12 7" stroke="#fff" /></Icon>
    </BrowserTools>
    <TreeBox>
      <TreeRows>
        {nodes.map((n, i) => (
          <TreeRow key={i} $bold={n.level === 0}>
            <Guide node={n} />
            {n.icon}
            {n.text}
          </TreeRow>
        ))}
      </TreeRows>
      <ScrollTrack>
        <Icon w={8} h={4}><path d="M4 0 8 4H0Z" fill="#444" /></Icon>
        <ScrollThumb><Icon w={6} h={8}><path d="M0 .5H6M0 3.500H6M0 6.500H6" stroke="#555" /></Icon></ScrollThumb>
        <Caret w={8} color="#444" />
      </ScrollTrack>
    </TreeBox>
  </Browser>
);

const Navigation = () => (
  <NavBar>
    <NavSlot $h={12} $end><Icon w={7} h={7}><circle cx="3.500" cy="3.500" r="3" fill="#666" /><path d="M2 2 5 5M5 2 2 5" stroke="#ddd" /></Icon></NavSlot>
    <NavSlot $h={40}><Icon w={22} h={22}><path d="M11 1H19Q21 1 21 3V11A10 10 0 1 1 11 1Z" fill="#c4c4c4" stroke="#dcdcdc" /><circle cx="11" cy="11" r="6" fill="#a9a9a9" stroke="#777" strokeWidth="1.500" /><path d="M5 17 8 14M17 17 14 14" stroke="#777" /></Icon></NavSlot>
    <NavSlot $h={9} $line><Caret w={4} color="#5a5a5a" /></NavSlot>
    <NavSlot $h={27}><Icon w={17} h={17}><path d="M4 9 1 7.500 2.500 6.500 5 8 4 3 5.500 2.500 7 7V1H8.500L9 7 10.500 1.500 12 2 11.500 7.500 13.500 4.500 15 5 12.500 12 11.500 16H6.500Z" fill="#dadada" stroke="#777" strokeWidth=".7" /></Icon></NavSlot>
    <NavSlot $h={22}><Icon w={17} h={17}><circle cx="7" cy="7" r="5.500" fill="#aaa" stroke="#cfcfcf" strokeWidth="1.500" /><path d="M5 4H9V9H5Z" fill="#e5e5e5" stroke="#666" /><path d="M11 11 15 15" stroke="#666" strokeWidth="2.500" /></Icon></NavSlot>
    <NavSlot $h={12}><Caret w={4} color="#5a5a5a" /></NavSlot>
    <NavSlot $h={22}><Icon w={17} h={17}><ellipse cx="8" cy="8" rx="7" ry="3.500" stroke="#666" /><ellipse cx="8" cy="8" rx="3" ry="7" stroke="#666" /><path d="M6 8H10M8 6V10" stroke="#aaa" /></Icon></NavSlot>
    <NavSlot $h={12}><Caret w={4} color="#5a5a5a" /></NavSlot>
    <NavSlot $h={25}><Icon w={17} h={15}><path d="M4 .5H12M1.500 3.500H15.500V13.500H1.500Z" stroke="#d0d0d0" strokeWidth="1.500" /><path d="M4.500 6.500H12.500V10.500H4.500Z" stroke="#dedede" /></Icon></NavSlot>
    <NavSlot $h={15} $end><Icon w={7} h={7}><circle cx="3.500" cy="3.500" r="3" fill="#666" stroke="#bbb" strokeWidth=".6" /><path d="M2 3.500H5" stroke="#ddd" /></Icon></NavSlot>
  </NavBar>
);

const Task = () => (
  <TaskBar>
    <TaskSlot $w={54}>
      <Icon w={37} h={37}>
        <defs><radialGradient id="orb" cx=".5" cy=".85" r=".8"><stop stopColor="#50d2f5" /><stop offset=".5" stopColor="#1f6ea8" /><stop offset="1" stopColor="#3c5670" /></radialGradient></defs>
        <circle cx="18.500" cy="18.500" r="17.500" fill="url(#orb)" stroke="#24435f" />
        <path d="M5 13Q18 3 32 13Q30 3 18 2 7 3 5 13Z" fill="#fff" opacity=".35" />
        <path d="M10 11Q14 8 18 11L16 18Q12 15.500 8.500 18Z" fill="#f0642a" />
        <path d="M19.500 12Q23 14.500 28 11.500L26 19Q22 21 17.500 18.500Z" fill="#8cc63e" />
        <path d="M8 20Q12 17.500 15.500 20L13.500 27Q10 24.500 6.500 26.500Z" fill="#3fa8ea" />
        <path d="M17 21Q21 23 25.500 21L23.500 28Q19 30 15 27.500Z" fill="#fdc62f" />
      </Icon>
    </TaskSlot>
    <TaskSlot $w={68}>
      <Icon w={32} h={30}><path d="M11 2H31V25H19L10 18Z" fill="#24468e" /><path d="M20 18 30 6V20Z" fill="#8bb0de" /><ellipse cx="16" cy="9" rx="6" ry="6.500" fill="#d9a97f" /><path d="M9 9Q9 1 17 1T25 8Q19 5 14 8Z" fill="#54301c" /><path d="M9 16 17 15 22 21 16 27Q7 28 6 22Z" fill="#cfe0ea" /><circle cx="8" cy="17" r="3.500" fill="#a5cf6b" /><path d="M1 26Q3 20 9 21T16 26Q9 29 1 26Z" fill="#7fc0dd" /><path d="M2 23Q10 27 20 22" stroke="#d9c46b" strokeWidth="2" /></Icon>
    </TaskSlot>
    <TaskSlot $w={56}>
      <Icon w={30} h={28}><circle cx="10" cy="6" r="4.500" fill="#57ab46" /><circle cx="20" cy="6" r="5" fill="#62a9df" /><path d="M2 23Q2 12 10 12T17 23Q10 28 2 23Z" fill="#7bc25f" stroke="#4a9740" /><path d="M14 23Q13 12 21 12T28 23Q21 28 14 23Z" fill="#8cc4ee" stroke="#4a86bd" /><path d="M1 15Q12 12 17 18T29 23" stroke="#edbd55" strokeWidth="2.500" /></Icon>
    </TaskSlot>
    <TaskSlot $w={69}>
      <Icon w={28} h={30}><ellipse cx="14" cy="26" rx="9" ry="3" fill="#282828" /><circle cx="14" cy="14" r="12.500" fill="#585858" stroke="#bdbdbd" strokeWidth="2" /><circle cx="14" cy="14" r="7.500" fill="#123d4d" /><circle cx="14" cy="14" r="5" fill="#2eb2cf" /><circle cx="12" cy="11" r="2" fill="#d6fbff" /></Icon>
    </TaskSlot>
    <TaskSlot $w={55}>
      <Icon w={24} h={30}><path d="M1 1H23V29H1Z" fill="#f3f9fd" stroke="#5db0df" /><path d="M3 3H21V11H3Z" fill="#e8f5fc" stroke="#5db0df" /><path d="M15 5H19V9.500H15Z" stroke="#2a7eb5" /><path d="M3 15H21M3 19H21M3 23H21M3 27H21" stroke="#59a7d5" strokeWidth="2.500" strokeDasharray="2.500 1.300" /></Icon>
    </TaskSlot>
    <TaskSlot $w={68}>
      <Icon w={28} h={26}><path d="M4 1H26V23H4Z" fill="#cfe9f8" stroke="#4f9fce" /><path d="M1 3H22V25H1Z" fill="#f1f8fc" stroke="#4f9fce" /><circle cx="12" cy="13" r="9" fill="#ee8a25" stroke="#ca640c" /><path d="M9 8 17 13 9 18Z" fill="#fff" /></Icon>
    </TaskSlot>
    <TaskSlot $w={58}>
      <Icon w={34} h={34}><rect x="1" y="11" width="32" height="22" rx="3" fill="#17120f" /><path d="M2 2 32 1V6L2 8ZM1 8H33V12H1Z" fill="#fff" stroke="#111" /><path d="M6 2 10 7M14 2 18 7M22 2 26 6M8 12 12 8M16 12 20 8M24 12 28 8" stroke="#111" strokeWidth="3" /><path d="M7 16V24Q7 28 11 28T14 24V16M14 28V20Q14 17 18 17T21 20V28M21 20Q21 17 25 17T28 20V28" stroke="#effcb5" strokeWidth="2.600" /></Icon>
    </TaskSlot>
    <TaskSlot $w={66}>
      <Icon w={32} h={32}><circle cx="16" cy="16" r="15" fill="#fff" /><path d="M16 3A13 13 0 0 1 29 15L22 14 16 9Z" fill="#ea4a34" /><path d="M29 17A13 13 0 0 1 24 26L23 14Z" fill="#f3b42b" /><path d="M23 27A13 13 0 0 1 8 26L13 22H22Z" fill="#2e9d49" /><path d="M7 25A13 13 0 0 1 3 14L9 20 12 22Z" fill="#2e72c9" /><path d="M3 12A13 13 0 0 1 15 3V10L9 18Z" fill="#8a55b5" /></Icon>
    </TaskSlot>
    <TaskSlot $w={61}>
      <Icon w={32} h={32}><rect width="32" height="32" rx="2" fill="#f6fafb" /><path d="M5 14Q8 5 16 5T27 14" stroke="#56a14e" strokeWidth="2.500" /><path d="M16 30 9 19A8 8 0 1 1 23 19Z" fill="#3796cb" /><circle cx="16" cy="15" r="5" fill="#fff" /><circle cx="16" cy="15" r="2.800" fill="#765049" /></Icon>
    </TaskSlot>
    <TaskButton>
      <Icon w={30} h={30}><circle cx="15" cy="15" r="14.500" fill="#fcd12c" /><path d="M15 15 2.500 8A14.500 14.500 0 0 1 28 8.500H15Z" fill="#dc3b2e" /><path d="M2.500 7.500A14.500 14.500 0 0 0 14 29.500L20.500 18.500 15 21 9 18Z" fill="#3aa64a" /><circle cx="15" cy="15" r="6.500" fill="#fff" /><circle cx="15" cy="15" r="5.200" fill="#3579dc" /></Icon>
    </TaskButton>
    <TaskButton>
      <Icon w={34} h={30}><path d="M1 4H10L12 6H32V27H1Z" fill="#f0d383" stroke="#c9a145" /><path d="M5 2H14V8H5ZM20 5H31V10H20Z" fill="#fdf4cf" stroke="#c9a145" /><path d="M4 2H6V5H4ZM14 3H16V6H14Z" fill="#43a34c" /><path d="M1 9H33V29H1Z" fill="#fbe9a9" stroke="#d7b65e" /><path d="M5 29V18H28V29H23V23H10V29Z" fill="#8bd2f2" stroke="#3a9ccc" /></Icon>
    </TaskButton>
    <TaskButton $active>
      <Icon w={32} h={32}><defs><linearGradient id="inv" x1="0" y1="0" x2="0" y2="1"><stop stopColor="#f9e3d4" stopOpacity=".3" /><stop offset="1" stopColor="#e8b593" /></linearGradient></defs><path d="M0 0H32V32H0Z" fill="url(#inv)" /><path d="M9 2H23V7H19V19H24V25H9V19H13V7H9Z" fill="#cf5a10" /><path d="M9 2H23V4H9ZM13 7H16V19H13Z" fill="#e57a28" /></Icon>
    </TaskButton>
    <TaskButton>
      <Icon w={34} h={32}><path d="M4 12Q10 4 20 6T29 17Q28 25 20 27 16 28 15 24T9 25Q1 24 4 12Z" fill="#dfeaf3" stroke="#5d8fb8" /><circle cx="9" cy="17" r="3" fill="#d8404c" /><circle cx="13" cy="11" r="2.500" fill="#5ab65a" /><circle cx="21" cy="10" r="2.500" fill="#f0cb4e" /><circle cx="17" cy="20" r="3" fill="#5aaee0" /><path d="M30 2 20 29" stroke="#ca9b5b" strokeWidth="4" /><path d="M28 1 33 3 31 8 27 7Z" fill="#b98a50" /></Icon>
    </TaskButton>
    <Tray>
      <Language>TR</Language>
      <TaskSlot $w={24}><Icon w={8} h={5}><path d="M4 0 8 5H0Z" fill="#fff" stroke="#576b82" strokeWidth=".5" /></Icon></TaskSlot>
      <TaskSlot $w={27}><Icon w={16} h={16}><path d="M0 2.500 6.500 1.500V7.500H0ZM7.500 1.300 16 0V7.500H7.500ZM0 8.500H6.500V14.500L0 13.500ZM7.500 8.500H16V16L7.500 14.700Z" fill="#fff" stroke="#4e5f74" strokeWidth=".5" /></Icon></TaskSlot>
      <TaskSlot $w={23}><Icon w={16} h={16}><path d="M1 1H3V16H1ZM4 2H9L10 4H15L14 9H9L8 8H4Z" fill="#fff" stroke="#3f4e60" strokeWidth=".7" /></Icon></TaskSlot>
      <TaskSlot $w={24}><Icon w={16} h={14}><path d="M1 11H3V13H1ZM4 9H6V13H4ZM7 6H9V13H7ZM10 3H12V13H10ZM13 1H15V13H13Z" fill="#e8edf3" stroke="#4e5f74" strokeWidth=".7" /></Icon></TaskSlot>
      <TaskSlot $w={24}><Icon w={16} h={16}><path d="M2 3H8V15H2Z" fill="#8396ae" stroke="#fff" strokeWidth="1.500" /><path d="M7 5H14V9Q14 11 11 11V14H9V11Q7 11 7 9ZM8.500 2V5M12.500 2V5" fill="#fff" stroke="#394757" strokeWidth=".8" /><path d="M4 1H6V3H4Z" fill="#fff" /></Icon></TaskSlot>
      <TaskSlot $w={24}><Icon w={16} h={16}><path d="M1 5.500H4L8 1.500V14.500L4 10.500H1Z" fill="#fff" stroke="#4e5f74" strokeWidth=".6" /><path d="M10 5Q12 8 10 11M12 3Q15.500 8 12 13" stroke="#fff" strokeWidth="1.200" /></Icon></TaskSlot>
      <Clock>11:59<br />26.06.15</Clock>
      <ShowDesktop />
    </Tray>
  </TaskBar>
);

export default function App() {
  return (
    <Window>
      <GlobalStyle />
      <Header>
        <AppButton>
          <Icon w={21} h={28}><path d="M2 1H18V7H14V20H18V26H2V20H6V7H2Z" fill="#d8640f" /><path d="M2 1H18V4H2ZM6 7H9V20H6Z" fill="#ee8a35" /><path d="M11 8H14V20H11Z" fill="#b34c0c" /></Icon>
          <Caret w={7} color="#222" />
        </AppButton>
        <HeaderRows>
          <Titles />
          <TabRow>
            <Slot $w={3} />
            {tabs.map(([name, w], i) => (
              <RibbonTab key={name} $w={w} $active={i === 0}>{name}</RibbonTab>
            ))}
            <Slot $w={70}>
              <Icon w={24} h={14} vb="0 2 24 14"><rect y="2" width="13" height="7" rx="2" fill="#f2f2f2" /><path d="M6.500 4 9 7H4Z" fill="#333" /><path d="M18 5H23L20.500 8Z" fill="#f2f2f2" /></Icon>
            </Slot>
          </TabRow>
        </HeaderRows>
      </Header>
      <RibbonPanels />
      <Work>
        <BrowserPanel />
        <Main>
          <Viewport>
            <Scene />
            <DocControls>
              <Icon w={11} h={12}><path d="M0 8.500H11" stroke="#fff" strokeWidth="2" /></Icon>
              <Icon w={11} h={12}><path d="M3.500 3V1.500H9.500V8H8.500M1 4.500H7V10.500H1Z" stroke="#fff" strokeWidth="1.600" /></Icon>
              <Icon w={11} h={12}><path d="M1.500 2 9 10.500M9 2 1.500 10.500" stroke="#fff" strokeWidth="2.200" /></Icon>
            </DocControls>
            <Navigation />
          </Viewport>
          <DocTabs>
            <DocTool><Icon w={17} h={15}><path d="M.5 1H11.500V8H.5ZM3 4H14V11H3ZM5 7H16.500V14H5Z" fill="#ececec" stroke="#222" /></Icon></DocTool>
            <DocTool><Icon w={16} h={14}><path d="M1 1H7V6H1ZM9 1H15V6H9ZM1 8H7V13H1ZM9 8H15V13H9Z" fill="#fff" stroke="#222" /></Icon></DocTool>
            <DocTool><Icon w={10} h={14}><path d="M5 3 9.500 8H.5Z" fill="#222" /></Icon></DocTool>
            <DocTab $w={72}>My Home</DocTab>
            <DocTab $w={111} $active>
              Assembly1.iam
              <Icon w={8} h={10} vb="0 -3 8 10"><path d="M.5.5H2.500L4 2 5.500.5H7.500V2L6 3.500 7.500 5V6.500H5.500L4 5 2.500 6.500H.5V5L2 3.500.5 2Z" stroke="#666" strokeWidth=".8" /></Icon>
            </DocTab>
          </DocTabs>
        </Main>
      </Work>
      <StatusBar>
        <StatusText>Ready</StatusText>
        <StatusCell $w={39}>312</StatusCell>
        <StatusCell $w={40}>12</StatusCell>
      </StatusBar>
      <Task />
    </Window>
  );
}
